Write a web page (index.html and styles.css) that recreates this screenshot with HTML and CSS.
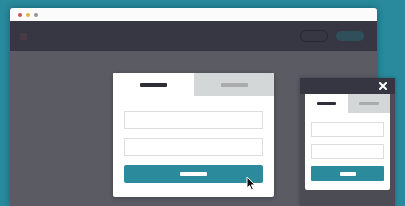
FILE: index.html
```
<!DOCTYPE html>
<html>
<head>
<meta charset="utf-8">
<link rel="stylesheet" href="styles.css">
</head>
<body>
<div class="browser">
  <div class="titlebar">
    <span class="dot red"></span><span class="dot yellow"></span><span class="dot green"></span>
  </div>
  <div class="appbar">
    <span class="logo"></span>
    <span class="spacer"></span>
    <span class="pill outline"></span>
    <span class="pill filled"></span>
  </div>
  <div class="content">
    <div class="modal">
      <div class="tabs">
        <div class="tab active"><span class="label"></span></div>
        <div class="tab inactive"><span class="label"></span></div>
      </div>
      <div class="form">
        <div class="input"></div>
        <div class="input"></div>
        <div class="button"><span class="label"></span></div>
      </div>
      <svg class="cursor" width="10" height="15" viewBox="0 0 10 15"><path d="M1 1 L1 12 L3.6 9.6 L5.6 14 L7.4 13.2 L5.4 8.9 L9 8.9 Z" fill="#111" stroke="#fff" stroke-width="1" stroke-linejoin="round"/></svg>
    </div>
  </div>
</div>
<div class="mobile">
  <div class="mobile-head">
    <svg class="close" width="8" height="8" viewBox="0 0 8 8"><path d="M1 1 L7 7 M7 1 L1 7" stroke="#fff" stroke-width="2" stroke-linecap="square"/></svg>
  </div>
  <div class="mobile-body">
    <div class="modal small">
      <div class="tabs">
        <div class="tab active"><span class="label"></span></div>
        <div class="tab inactive"><span class="label"></span></div>
      </div>
      <div class="form">
        <div class="input"></div>
        <div class="input"></div>
        <div class="button"><span class="label"></span></div>
      </div>
    </div>
  </div>
</div>
</body>
</html>
```
FILE: styles.css
```
html, body {
  margin: 0;
  padding: 0;
}
body {
  width: 405px;
  height: 206px;
  overflow: hidden;
  background: #288a9c;
  position: relative;
  font-family: "Liberation Sans", Arial, sans-serif;
}
.browser {
  margin: 8px 0 0 10px;
  width: 367px;
  height: 198px;
  display: flex;
  flex-direction: column;
  border-radius: 3px 3px 0 0;
  overflow: hidden;
  box-shadow: 0 0 6px rgba(0, 40, 50, 0.45);
}
.titlebar {
  height: 13px;
  background: #fbfbfb;
  display: flex;
  align-items: center;
  padding-left: 8px;
  gap: 4px;
}
.dot {
  width: 4px;
  height: 4px;
  border-radius: 50%;
}
.red { background: #c95350; }
.yellow { background: #e2b244; }
.green { background: #8e9b8c; }
.appbar {
  height: 30px;
  background: #363743;
  display: flex;
  align-items: center;
  padding: 0 13px 0 10px;
}
.logo {
  width: 7px;
  height: 7px;
  background: #4a3a46;
  border-radius: 1px;
}
.spacer { flex: 1; }
.pill {
  height: 10px;
  border-radius: 6px;
}
.pill.outline {
  width: 26px;
  border: 1px solid #272832;
  margin-right: 8px;
}
.pill.filled {
  width: 28px;
  height: 10px;
  background: #2f4f5a;
}
.content {
  flex: 1;
  background: #5a5b63;
  display: flex;
  justify-content: center;
  align-items: flex-start;
  padding-top: 22px;
}
.modal {
  width: 161px;
  background: #ffffff;
  border-radius: 2px;
  position: relative;
  box-shadow: 0 1px 4px rgba(0, 0, 0, 0.25);
}
.tabs {
  display: flex;
  height: 23px;
}
.tab {
  display: flex;
  align-items: center;
  justify-content: center;
}
.tab.active {
  width: 81px;
  background: #ffffff;
}
.tab.inactive {
  flex: 1;
  background: #d4d7d8;
}
.tab .label {
  width: 27px;
  height: 4px;
  border-radius: 1px;
}
.tab.active .label { background: #2e2f36; }
.tab.inactive .label { background: #a9abad; }
.form {
  padding: 15px 11px 14px;
  display: flex;
  flex-direction: column;
  gap: 9px;
}
.input {
  height: 16px;
  border: 1px solid #dcdddd;
  background: #fff;
}
.button {
  height: 18px;
  background: #2b8a9c;
  border-radius: 2px;
  display: flex;
  align-items: center;
  justify-content: center;
}
.button .label {
  width: 27px;
  height: 4px;
  background: #ffffff;
  border-radius: 1px;
}
.cursor {
  position: absolute;
  left: 133px;
  top: 103px;
}
.mobile {
  position: absolute;
  left: 300px;
  top: 78px;
  width: 95px;
  height: 128px;
  display: flex;
  flex-direction: column;
  box-shadow: 0 0 4px rgba(0, 0, 0, 0.3);
}
.mobile-head {
  height: 16px;
  background: #353641;
  display: flex;
  align-items: center;
  justify-content: flex-end;
  padding-right: 8px;
}
.close {
  display: block;
}
.mobile-body {
  flex: 1;
  background: #4b4c54;
  padding: 0 5px;
}
.modal.small {
  width: 85px;
  border-radius: 0 0 2px 2px;
  box-shadow: none;
}
.small .tabs { height: 19px; }
.small .tab.active { width: 43px; }
.small .tab .label {
  width: 19px;
  height: 3px;
}
.small .tab.inactive .label { width: 20px; }
.small .form {
  padding: 9px 6px 9px;
  gap: 7px;
}
.small .input { height: 13px; }
.small .button {
  height: 15px;
  border-radius: 1px;
}
.small .button .label {
  width: 16px;
  height: 4px;
}
```
